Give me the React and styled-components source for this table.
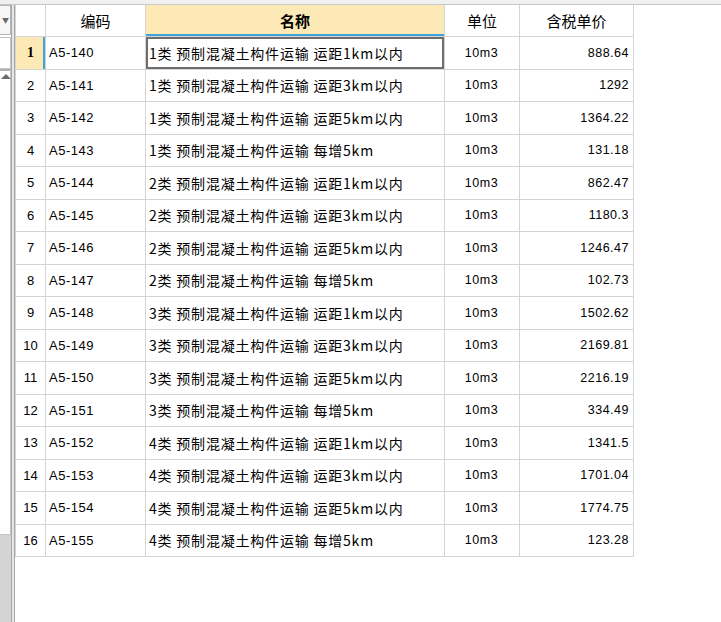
import React from 'react';
import styled, { createGlobalStyle } from 'styled-components';

const rows = [
  ['A5-140', '1类 预制混凝土构件运输 运距1km以内', '10m3', '888.64'],
  ['A5-141', '1类 预制混凝土构件运输 运距3km以内', '10m3', '1292'],
  ['A5-142', '1类 预制混凝土构件运输 运距5km以内', '10m3', '1364.22'],
  ['A5-143', '1类 预制混凝土构件运输 每增5km', '10m3', '131.18'],
  ['A5-144', '2类 预制混凝土构件运输 运距1km以内', '10m3', '862.47'],
  ['A5-145', '2类 预制混凝土构件运输 运距3km以内', '10m3', '1180.3'],
  ['A5-146', '2类 预制混凝土构件运输 运距5km以内', '10m3', '1246.47'],
  ['A5-147', '2类 预制混凝土构件运输 每增5km', '10m3', '102.73'],
  ['A5-148', '3类 预制混凝土构件运输 运距1km以内', '10m3', '1502.62'],
  ['A5-149', '3类 预制混凝土构件运输 运距3km以内', '10m3', '2169.81'],
  ['A5-150', '3类 预制混凝土构件运输 运距5km以内', '10m3', '2216.19'],
  ['A5-151', '3类 预制混凝土构件运输 每增5km', '10m3', '334.49'],
  ['A5-152', '4类 预制混凝土构件运输 运距1km以内', '10m3', '1341.5'],
  ['A5-153', '4类 预制混凝土构件运输 运距3km以内', '10m3', '1701.04'],
  ['A5-154', '4类 预制混凝土构件运输 运距5km以内', '10m3', '1774.75'],
  ['A5-155', '4类 预制混凝土构件运输 每增5km', '10m3', '123.28'],
];

const GlobalStyle = createGlobalStyle`
  html, body {
    margin: 0;
    padding: 0;
    background: #fff;
    overflow: hidden;
  }
  body {
    font-family: "Noto Sans CJK SC", "Liberation Sans", sans-serif;
    color: #000;
  }
`;

const Page = styled.div`
  width: 721px;
  height: 622px;
  display: flex;
  flex-direction: column;
  background: #fff;
`;

const TopStrip = styled.div`
  height: 4px;
  flex: none;
  background: #f0f0f0;
  border-bottom: 1px solid #c8c8c8;
`;

const Body = styled.div`
  flex: 1;
  display: flex;
  min-height: 0;
`;

const Sidebar = styled.div`
  width: 11px;
  flex: none;
  display: flex;
  flex-direction: column;
  background: #fff;
`;

const DropBox = styled.div`
  height: 28px;
  flex: none;
  background: #f7f7f7;
  border: 1px solid #b4b4b4;
  border-left: none;
  display: flex;
  align-items: center;
  justify-content: flex-start;
  padding-left: 2px;
  color: #666;
  font-size: 7px;
`;

const InputBox = styled.div`
  height: 30px;
  flex: none;
  margin-top: 2px;
  background: #fff;
  border: 1px solid #c4c4c4;
  border-left: none;
`;

const ScrollBox = styled.div`
  flex: 1;
  background: #fff;
  border: 1px solid #c4c4c4;
  border-left: none;
  border-top: 2px solid #b0b0b0;
`;

const ArrowUp = styled.div`
  margin: 3px 0 0 1px;
  width: 0;
  height: 0;
  border-left: 5px solid transparent;
  border-right: 5px solid transparent;
  border-bottom: 5px solid #6a6a6a;
`;

const GreyFill = styled.div`
  height: 87px;
  flex: none;
  background: #d4d4d4;
`;

const Divider = styled.div`
  width: 4px;
  flex: none;
  background: #e6e6e6;
  border-left: 1px solid #a8a8a8;
  border-right: 1px solid #a8a8a8;
  box-sizing: border-box;
`;

const GridArea = styled.div`
  flex: 1;
  min-width: 0;
  background: #fff;
`;

const Table = styled.table`
  border-collapse: collapse;
  table-layout: fixed;
  width: 619px;
`;

const Col = styled.col`
  width: ${p => p.$w}px;
`;

const Head = styled.th`
  height: 31px;
  padding: 0;
  border: 1px solid #d4d4d4;
  border-top: none;
  font-size: 15px;
  font-weight: ${p => (p.$active ? 700 : 400)};
  background: ${p => (p.$active ? '#fde9b6' : '#fff')};
  box-shadow: ${p => (p.$active ? 'inset 0 -2px 0 #3ea3d9' : 'none')};
  text-align: center;
  vertical-align: middle;
`;

const Row = styled.tr`
  height: 32.5px;
`;

const Num = styled.td`
  padding: 0;
  border: 1px solid #d4d4d4;
  font-family: ${p => (p.$sel ? '"Liberation Serif", serif' : '"Liberation Sans", sans-serif')};
  font-size: ${p => (p.$sel ? '14px' : '13px')};
  text-align: center;
  font-weight: ${p => (p.$sel ? 700 : 400)};
  background: ${p => (p.$sel ? '#fde9b6' : '#fff')};
  box-shadow: ${p => (p.$sel ? 'inset -2px 0 0 #3ea3d9' : 'none')};
`;

const Cell = styled.td`
  padding: 0 4px 0 3px;
  border: 1px solid #d4d4d4;
  font-size: 14px;
  letter-spacing: 0.8px;
  white-space: nowrap;
  overflow: hidden;
  text-align: ${p => p.$align || 'left'};
  box-shadow: ${p => (p.$focus ? 'inset 0 0 0 2px #6e6e6e' : 'none')};
`;

const Code = styled(Cell)`
  font-family: "Liberation Sans", "Noto Sans CJK SC", sans-serif;
  font-size: 13px;
  letter-spacing: 0.5px;
`;

const Small = styled(Cell)`
  font-family: "Liberation Sans", "Noto Sans CJK SC", sans-serif;
  font-size: 12.5px;
  letter-spacing: 0.5px;
`;

export default function App() {
  return (
    <Page>
      <GlobalStyle />
      <TopStrip />
      <Body>
        <Sidebar>
          <DropBox>▼</DropBox>
          <InputBox />
          <ScrollBox>
            <ArrowUp />
          </ScrollBox>
          <GreyFill />
        </Sidebar>
        <Divider />
        <GridArea>
          <Table>
            <colgroup>
              <Col $w={30} />
              <Col $w={100} />
              <Col $w={299} />
              <Col $w={75} />
              <Col $w={114} />
            </colgroup>
            <thead>
              <tr>
                <Head />
                <Head>编码</Head>
                <Head $active>名称</Head>
                <Head>单位</Head>
                <Head>含税单价</Head>
              </tr>
            </thead>
            <tbody>
              {rows.map((r, i) => (
                <Row key={r[0]}>
                  <Num $sel={i === 0}>{i + 1}</Num>
                  <Code>{r[0]}</Code>
                  <Cell $focus={i === 0}>{r[1]}</Cell>
                  <Small $align="center">{r[2]}</Small>
                  <Small $align="right">{r[3]}</Small>
                </Row>
              ))}
            </tbody>
          </Table>
        </GridArea>
      </Body>
    </Page>
  );
}
